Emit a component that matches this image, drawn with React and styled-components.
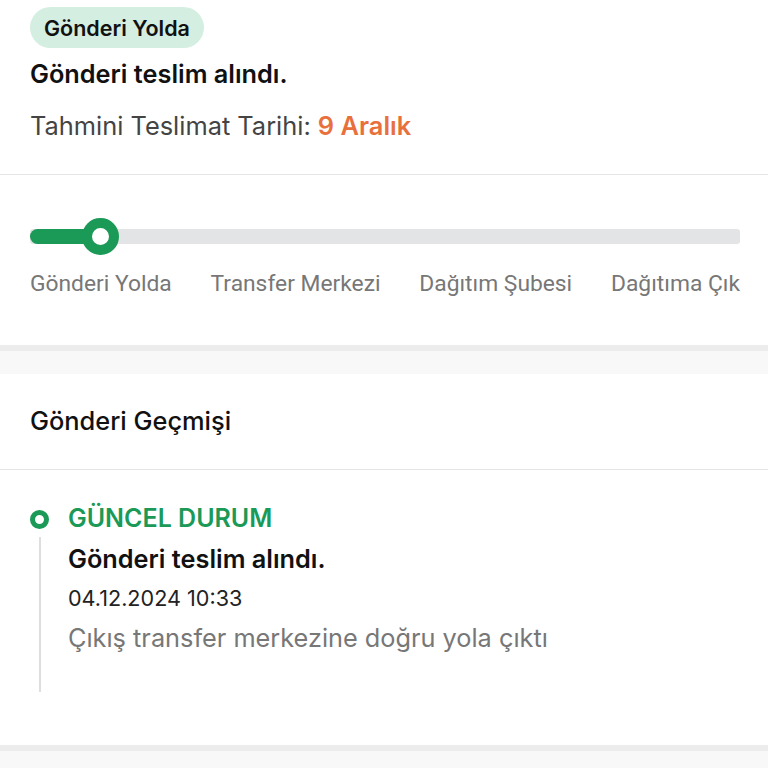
import React from "react";
import styled, { createGlobalStyle } from "styled-components";

const Global = createGlobalStyle`
  html, body { margin: 0; padding: 0; background: #fff; }
  body { font-family: Inter, "Noto Sans", sans-serif; }
  * { box-sizing: border-box; }
`;

const Page = styled.div`
  width: 768px;
  display: flex;
  flex-direction: column;
  background: #fff;
`;

const Section = styled.section`
  background: #fff;
`;

const Gap = styled.div`
  height: 29px;
  background: #f8f8f8;
  border-top: 6px solid #ececec;
`;

const Summary = styled.div`
  padding: 7px 30px 0;
  height: 174px;
  display: flex;
  flex-direction: column;
  align-items: flex-start;
`;

const Badge = styled.span`
  display: inline-flex;
  align-items: center;
  height: 41px;
  padding: 0 14px;
  border-radius: 21px;
  background: #d4eee1;
  color: #111;
  font-size: 21.5px;
  font-weight: 600;
`;

const Title = styled.div`
  margin-top: 12px;
  font-size: 25.3px;
  font-weight: 600;
  color: #111;
  line-height: 28px;
`;

const Eta = styled.div`
  margin-top: 24px;
  font-size: 25.4px;
  color: #444;
  line-height: 28px;
`;

const EtaDate = styled.span`
  color: #e8703c;
  font-weight: 600;
`;

const Divider = styled.div`
  height: 1px;
  background: #e4e4e4;
`;

const ProgressArea = styled.div`
  padding: 54px 28px 0 30px;
  height: 170px;
`;

const Track = styled.div`
  position: relative;
  height: 15px;
  border-radius: 3px;
  background: #e3e4e6;
`;

const Fill = styled.div`
  position: absolute;
  left: 0;
  top: 0;
  bottom: 0;
  border-radius: 8px 0 0 8px;
  background: #1a9957;
`;

const Thumb = styled.div`
  position: absolute;
  top: 50%;
  width: 37px;
  height: 37px;
  margin: -18.5px 0 0 -18.5px;
  border-radius: 50%;
  background: #fff;
  border: 10px solid #1a9957;
`;

const Steps = styled.div`
  margin-top: 28px;
  display: flex;
  justify-content: space-between;
`;

const Step = styled.span`
  font-family: Roboto, Inter, sans-serif;
  font-size: 22.8px;
  line-height: 24px;
  color: #777;
`;

const HistoryHead = styled.div`
  height: 95px;
  padding: 0 30px 3px;
  display: flex;
  align-items: center;
  font-size: 25.4px;
  font-weight: 500;
  color: #111;
`;

const Timeline = styled.div`
  padding: 33px 30px 53px;
`;

const Event = styled.div`
  display: grid;
  grid-template-columns: 38px 1fr;
`;

const Rail = styled.div`
  display: flex;
  flex-direction: column;
  align-items: center;
  width: 19px;
`;

const Dot = styled.div`
  width: 19px;
  height: 19px;
  margin-top: 7px;
  border-radius: 50%;
  border: 5px solid #1a9957;
  background: #fff;
`;

const Line = styled.div`
  flex: 1;
  width: 2px;
  margin-top: 8px;
  background: #dedede;
`;

const Body = styled.div`
  display: flex;
  flex-direction: column;
`;

const Status = styled.div`
  font-size: 25px;
  font-weight: 600;
  color: #1a9957;
  line-height: 30px;
`;

const EventTitle = styled.div`
  margin-top: 12px;
  font-size: 25.3px;
  font-weight: 600;
  color: #111;
  line-height: 28px;
`;

const EventTime = styled.div`
  margin-top: 12px;
  font-size: 21.6px;
  color: #222;
  line-height: 26px;
`;

const EventDesc = styled.div`
  margin-top: 13px;
  font-size: 25.3px;
  color: #777;
  line-height: 28px;
  padding-bottom: 40px;
`;

export default function App() {
  const progress = 70;
  return (
    <Page>
      <Global />
      <Section>
        <Summary>
          <Badge>Gönderi Yolda</Badge>
          <Title>Gönderi teslim alındı.</Title>
          <Eta>
            Tahmini Teslimat Tarihi: <EtaDate>9 Aralık</EtaDate>
          </Eta>
        </Summary>
        <Divider />
        <ProgressArea>
          <Track>
            <Fill style={{ width: progress }} />
            <Thumb style={{ left: progress }} />
          </Track>
          <Steps>
            <Step>Gönderi Yolda</Step>
            <Step>Transfer Merkezi</Step>
            <Step>Dağıtım Şubesi</Step>
            <Step>Dağıtıma Çık</Step>
          </Steps>
        </ProgressArea>
      </Section>
      <Gap />
      <Section>
        <HistoryHead>Gönderi Geçmişi</HistoryHead>
        <Divider />
        <Timeline>
          <Event>
            <Rail>
              <Dot />
              <Line />
            </Rail>
            <Body>
              <Status>GÜNCEL DURUM</Status>
              <EventTitle>Gönderi teslim alındı.</EventTitle>
              <EventTime>04.12.2024 10:33</EventTime>
              <EventDesc>Çıkış transfer merkezine doğru yola çıktı</EventDesc>
            </Body>
          </Event>
        </Timeline>
      </Section>
      <Gap />
    </Page>
  );
}
